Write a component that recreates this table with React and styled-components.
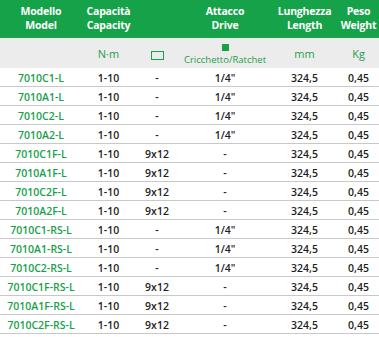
import React from 'react'
import styled, { createGlobalStyle } from 'styled-components'

const GlobalStyle = createGlobalStyle`
body {
  margin: 0;
  background: #fff;
  font-family: "Open Sans", "Liberation Sans", sans-serif;
}
`

const Table = styled.table`
width: 379px;
border-collapse: collapse;
table-layout: fixed;
`

const HeadRow = styled.tr`
background: #16a249;
`

const HeadCell = styled.th`
height: 37px;
color: #fff;
font-size: 10.5px;
font-weight: 700;
letter-spacing: -0.2px;
line-height: 13.5px;
padding: 0 0 1px;
text-align: center;
vertical-align: middle;
`

const UnitRow = styled.tr`
background: #ececec;
`

const UnitCell = styled.td`
height: 28px;
color: #1f9d4c;
font-size: 11px;
line-height: 12px;
padding: 2px 0 0;
text-align: center;
vertical-align: middle;
`

const Small = styled.div`
font-size: 9.5px;
line-height: 11px;
margin-top: 3px;
`

const OutlineBox = styled.span`
display: inline-block;
width: 11px;
height: 7px;
border: 1px solid #16a249;
vertical-align: middle;
`

const FilledBox = styled.span`
display: block;
width: 7px;
height: 7px;
margin: 0 auto;
background: #16a249;
`

const Row = styled.tr`
border-bottom: 1px solid #c8c8c8;
`

const Cell = styled.td`
height: 16px;
color: ${props => (props.model ? '#17a14a' : '#1e1e1e')};
font-size: 10.5px;
font-weight: 600;
line-height: 14px;
padding: 2px 0 0;
text-align: center;
vertical-align: middle;
white-space: nowrap;
`

const rows = [
  ['7010C1-L', '-', '1/4"'],
  ['7010A1-L', '-', '1/4"'],
  ['7010C2-L', '-', '1/4"'],
  ['7010A2-L', '-', '1/4"'],
  ['7010C1F-L', '9x12', '-'],
  ['7010A1F-L', '9x12', '-'],
  ['7010C2F-L', '9x12', '-'],
  ['7010A2F-L', '9x12', '-'],
  ['7010C1-RS-L', '-', '1/4"'],
  ['7010A1-RS-L', '-', '1/4"'],
  ['7010C2-RS-L', '-', '1/4"'],
  ['7010C1F-RS-L', '9x12', '-'],
  ['7010A1F-RS-L', '9x12', '-'],
  ['7010C2F-RS-L', '9x12', '-'],
]

const App = () => {
  return (
    <>
      <GlobalStyle />
      <Table>
        <colgroup>
          <col style={{ width: 82 }} />
          <col style={{ width: 53 }} />
          <col style={{ width: 44 }} />
          <col style={{ width: 92 }} />
          <col style={{ width: 67 }} />
          <col style={{ width: 41 }} />
        </colgroup>
        <thead>
          <HeadRow>
            <HeadCell>Modello<br />Model</HeadCell>
            <HeadCell>Capacità<br />Capacity</HeadCell>
            <HeadCell />
            <HeadCell>Attacco<br />Drive</HeadCell>
            <HeadCell>Lunghezza<br />Length</HeadCell>
            <HeadCell>Peso<br />Weight</HeadCell>
          </HeadRow>
          <UnitRow>
            <UnitCell />
            <UnitCell>N·m</UnitCell>
            <UnitCell><OutlineBox /></UnitCell>
            <UnitCell>
              <FilledBox />
              <Small>Cricchetto/Ratchet</Small>
            </UnitCell>
            <UnitCell>mm</UnitCell>
            <UnitCell>Kg</UnitCell>
          </UnitRow>
        </thead>
        <tbody>
          {rows.map(([model, square, drive]) => (
            <Row key={model}>
              <Cell model>{model}</Cell>
              <Cell>1-10</Cell>
              <Cell>{square}</Cell>
              <Cell>{drive}</Cell>
              <Cell>324,5</Cell>
              <Cell>0,45</Cell>
            </Row>
          ))}
        </tbody>
      </Table>
    </>
  )
}

export default App
